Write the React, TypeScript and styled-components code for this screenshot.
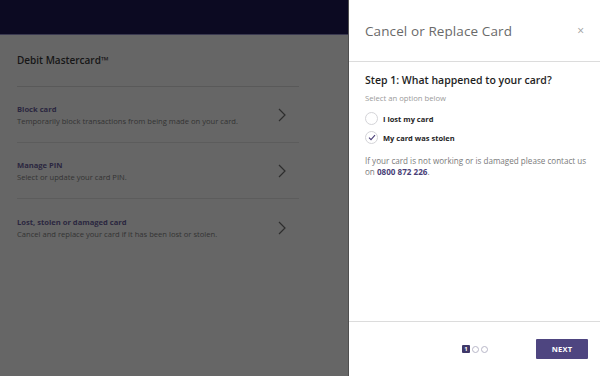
import styled, { createGlobalStyle } from "styled-components";

const GlobalStyle = createGlobalStyle`
  * { box-sizing: border-box; }
  html, body { margin: 0; padding: 0; }
  body {
    font-family: "Open Sans", "Liberation Sans", sans-serif;
    background: #666666;
  }
`;

const options = [
  { label: "I lost my card", checked: false },
  { label: "My card was stolen", checked: true },
];

const rows = [
  { title: "Block card", text: "Temporarily block transactions from being made on your card." },
  { title: "Manage PIN", text: "Select or update your card PIN." },
  { title: "Lost, stolen or damaged card", text: "Cancel and replace your card if it has been lost or stolen." },
];

const Chevron = () => (
  <svg width="8" height="14" viewBox="0 0 8 14" fill="none">
    <path d="M1 1l6 6-6 6" stroke="#2e2e2e" strokeWidth="1.2" />
  </svg>
);

const Check = () => (
  <svg width="8" height="7" viewBox="0 0 8 7" fill="none">
    <path d="M1 3.6l2 2L7 1.2" stroke="#4a3f78" strokeWidth="1.1" />
  </svg>
);

const App: React.FC = () => {
  return (
    <>
      <GlobalStyle />
      <Screen>
        <Page>
          <TopBar />
          <Content>
            <CardName>Debit Mastercard™</CardName>
            <List>
              {rows.map((r) => (
                <Row key={r.title}>
                  <RowText>
                    <RowTitle>{r.title}</RowTitle>
                    <RowDesc>{r.text}</RowDesc>
                  </RowText>
                  <Chevron />
                </Row>
              ))}
            </List>
          </Content>
        </Page>

        <Drawer>
          <DrawerHead>
            <DrawerTitle>Cancel or Replace Card</DrawerTitle>
            <Close>×</Close>
          </DrawerHead>
          <DrawerBody>
            <Step>Step 1: What happened to your card?</Step>
            <Hint>Select an option below</Hint>
            <Options>
              {options.map((o) => (
                <Option key={o.label}>
                  <Radio>{o.checked && <Check />}</Radio>
                  <OptionLabel>{o.label}</OptionLabel>
                </Option>
              ))}
            </Options>
            <Note>
              If your card is not working or is damaged please contact us on{" "}
              <Phone>0800 872 226</Phone>.
            </Note>
          </DrawerBody>
          <DrawerFoot>
            <Dots>
              <DotActive>1</DotActive>
              <Dot />
              <Dot />
            </Dots>
            <NextButton>NEXT</NextButton>
          </DrawerFoot>
        </Drawer>
      </Screen>
    </>
  );
};

export default App;

const Screen = styled.div`
  display: flex;
  width: 600px;
  height: 376px;
  overflow: hidden;
`;

const Page = styled.div`
  width: 348px;
  flex-shrink: 0;
  background: #666666;
  display: flex;
  flex-direction: column;
`;

const TopBar = styled.div`
  height: 35px;
  background: #0c0a22;
  border-bottom: 1px solid #3a3950;
`;

const Content = styled.div`
  padding: 17px 49px 0 17px;
`;

const CardName = styled.div`
  font-size: 10px;
  font-weight: 600;
  color: #161616;
  line-height: 16px;
  padding-bottom: 18px;
  border-bottom: 1px solid #595959;
`;

const List = styled.div`
  display: flex;
  flex-direction: column;
`;

const Row = styled.div`
  height: 56px;
  display: flex;
  align-items: center;
  justify-content: space-between;
  padding: 1px 13px 0 0;
  border-bottom: 1px solid #5c5c5c;

  &:last-child {
    border-bottom: none;
  }
`;

const RowText = styled.div`
  display: flex;
  flex-direction: column;
`;

const RowTitle = styled.div`
  font-size: 7.6px;
  font-weight: 700;
  color: #2b2740;
  line-height: 12px;
`;

const RowDesc = styled.div`
  font-size: 7.6px;
  color: #333333;
  line-height: 12px;
`;

const Drawer = styled.div`
  flex: 1;
  background: #ffffff;
  border-left: 1px solid #4f4f4f;
  display: flex;
  flex-direction: column;
`;

const DrawerHead = styled.div`
  height: 62px;
  display: flex;
  align-items: center;
  justify-content: space-between;
  padding: 0 16px 0 16px;
  border-bottom: 1px solid #dcdcdc;
`;

const DrawerTitle = styled.div`
  font-size: 13.5px;
  color: #6a6a6a;
  letter-spacing: 0.1px;
`;

const Close = styled.div`
  font-size: 12px;
  color: #a0a0a0;
  line-height: 1;
`;

const DrawerBody = styled.div`
  flex: 1;
  padding: 10px 10px 0 16px;
`;

const Step = styled.div`
  font-size: 10.5px;
  font-weight: 600;
  color: #1e1e1e;
  line-height: 16px;
`;

const Hint = styled.div`
  font-size: 7.7px;
  color: #9a9a9a;
  margin-top: 5px;
  line-height: 10px;
`;

const Options = styled.div`
  display: flex;
  flex-direction: column;
  gap: 6px;
  margin-top: 9px;
`;

const Option = styled.div`
  display: flex;
  align-items: center;
  gap: 5px;
`;

const Radio = styled.div`
  width: 13px;
  height: 13px;
  border-radius: 50%;
  border: 1px solid #d4d4d8;
  display: flex;
  align-items: center;
  justify-content: center;
`;

const OptionLabel = styled.div`
  font-size: 7.5px;
  font-weight: 700;
  color: #1e1e1e;
`;

const Note = styled.p`
  margin: 11px 0 0;
  font-size: 8.1px;
  line-height: 11px;
  color: #7a7a7a;
`;

const Phone = styled.span`
  font-weight: 700;
  color: #4a3f78;
`;

const DrawerFoot = styled.div`
  height: 55px;
  border-top: 1px solid #dcdcdc;
  display: flex;
  align-items: center;
  justify-content: flex-end;
  padding: 0 12px 0 0;
  gap: 48px;
`;

const Dots = styled.div`
  display: flex;
  align-items: center;
  gap: 2px;
`;

const DotActive = styled.div`
  width: 8px;
  height: 8px;
  border-radius: 1px;
  background: #3f3869;
  color: #ffffff;
  font-size: 6px;
  font-weight: 700;
  display: flex;
  align-items: center;
  justify-content: center;
  line-height: 1;
`;

const Dot = styled.div`
  width: 7px;
  height: 7px;
  border-radius: 50%;
  border: 1px solid #b8b6c8;
`;

const NextButton = styled.button`
  width: 52px;
  height: 20px;
  border: none;
  border-radius: 1px;
  background: #4e4580;
  color: #ffffff;
  font-family: inherit;
  font-size: 7.5px;
  font-weight: 700;
  letter-spacing: 0.2px;
  padding: 0;
`;
